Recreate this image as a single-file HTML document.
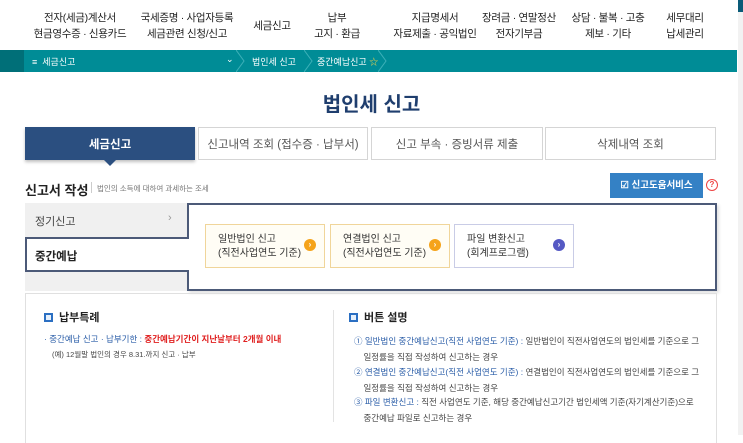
<!DOCTYPE html>
<html><head><meta charset="utf-8"><style>
*{margin:0;padding:0;box-sizing:border-box}
body{width:743px;height:435px;overflow:hidden;background:#fff;font-family:"Liberation Sans","Noto Sans CJK KR",sans-serif;color:#333;position:relative}
.a{position:absolute}
.nav{font-size:10.5px;color:#222;text-align:center;line-height:16px;top:10px;white-space:nowrap;width:120px;letter-spacing:-0.3px}
.bar{top:50px;left:0;width:737px;height:22px;background:#008c96}
.tab{top:127px;height:33px;border:1px solid #d5d5d5;background:#fff;font-size:11.5px;color:#555;display:flex;align-items:center;justify-content:center}
.card{top:224px;width:120px;height:44px;border:1px solid #f0d59a;background:#fffdf5;font-size:10px;line-height:14px;padding:8px 0 0 12px;color:#333}
.ic{position:absolute;right:8px;top:14px;width:12px;height:12px;border-radius:50%;background:#f5a31a;color:#fff;font-size:8px;line-height:12px;text-align:center;font-weight:bold}
.t{font-size:8.5px;color:#444;white-space:nowrap}
.b{color:#2b5ea8}
.sq{display:inline-block;width:9px;height:9px;border:2px solid #2b6fc2;background:#e6f0fb;margin-right:6px;vertical-align:-1px}
.chev{position:absolute;top:50px;width:10px;height:22px}
</style></head><body>
<div class="a nav" style="left:20px">전자(세금)계산서<br>현금영수증 · 신용카드</div>
<div class="a nav" style="left:127px">국세증명 · 사업자등록<br>세금관련 신청/신고</div>
<div class="a nav" style="left:212px;top:18px">세금신고</div>
<div class="a nav" style="left:277px">납부<br>고지 · 환급</div>
<div class="a nav" style="left:375px">지급명세서<br>자료제출 · 공익법인</div>
<div class="a nav" style="left:459px">장려금 · 연말정산<br>전자기부금</div>
<div class="a nav" style="left:548px">상담 · 불복 · 고충<br>제보 · 기타</div>
<div class="a nav" style="left:625px">세무대리<br>납세관리</div>
<div class="a" style="left:738px;top:0;width:5px;height:435px;background:#f2f2f2"></div>
<div class="a" style="left:738px;top:0;width:5px;height:12px;background:#0a5b78"></div>
<div class="a bar"></div>
<div class="a" style="left:0;top:50px;width:24px;height:22px;background:#006f78"></div>
<div class="a" style="left:32px;top:55px;font-size:9px;color:#fff">≡ &nbsp;세금신고</div>
<div class="a" style="left:226px;top:54px;font-size:9px;color:#fff">⌄</div>
<svg class="chev" style="left:236px" viewBox="0 0 10 22"><path d="M0 0L8 11L0 22" fill="none" stroke="#3cb0b8" stroke-width="1"/></svg>
<div class="a" style="left:252px;top:55px;font-size:9px;color:#fff">법인세 신고</div>
<svg class="chev" style="left:304px" viewBox="0 0 10 22"><path d="M0 0L8 11L0 22" fill="none" stroke="#3cb0b8" stroke-width="1"/></svg>
<div class="a" style="left:317px;top:55px;font-size:9px;color:#fff">중간예납신고 <span style="color:#f3d34a">☆</span></div>
<svg class="chev" style="left:378px" viewBox="0 0 10 22"><path d="M0 0L8 11L0 22" fill="none" stroke="#3cb0b8" stroke-width="1"/></svg>
<div class="a" style="left:0;width:743px;top:88px;text-align:center;font-size:20px;font-weight:bold;color:#1f3e6e">법인세 신고</div>
<div class="a tab" style="left:25px;width:170px;background:#2b4f80;border-color:#2b4f80;color:#fff;font-weight:bold;box-shadow:0 2px 3px rgba(0,0,0,.25)">세금신고</div>
<div class="a" style="left:104px;top:160px;border:6px solid transparent;border-top-color:#2b4f80;border-bottom:0"></div>
<div class="a tab" style="left:198px;width:170px">신고내역 조회 (접수증 · 납부서)</div>
<div class="a tab" style="left:371px;width:172px">신고 부속 · 증빙서류 제출</div>
<div class="a tab" style="left:545px;width:171px">삭제내역 조회</div>
<div class="a" style="left:25px;top:180px;font-size:13px;font-weight:bold;color:#222">신고서 작성</div>
<div class="a" style="left:91px;top:182px;width:1px;height:11px;background:#ccc"></div>
<div class="a" style="left:97px;top:183px;font-size:7.5px;color:#777">법인의 소득에 대하여 과세하는 조세</div>
<div class="a" style="left:610px;top:173px;width:93px;height:25px;background:#3481c5;color:#fff;font-size:9.5px;font-weight:bold;text-align:center;line-height:25px">☑ 신고도움서비스</div>
<div class="a" style="left:706px;top:179px;width:12px;height:12px;border:1.5px solid #e44;border-radius:50%;color:#e44;font-size:8px;text-align:center;line-height:10px;font-weight:bold">?</div>
<div class="a" style="left:25px;top:203px;width:162px;height:88px;background:#f0f0f0"></div>
<div class="a" style="left:35px;top:213px;font-size:11px;color:#444">정기신고</div>
<div class="a" style="left:168px;top:212px;font-size:11px;color:#999">›</div>
<div class="a" style="left:187px;top:203px;width:530px;height:88px;border:2px solid #4c5a78;background:#fff;box-shadow:2px 2px 3px rgba(0,0,0,.12)"></div>
<div class="a" style="left:25px;top:237px;width:164px;height:35px;border:2px solid #4c5a78;border-right:none;background:#fff"></div>
<div class="a" style="left:35px;top:248px;font-size:11.5px;font-weight:bold;color:#222">중간예납</div>
<div class="a card" style="left:205px">일반법인 신고<br>(직전사업연도 기준)<span class="ic">›</span></div>
<div class="a card" style="left:330px">연결법인 신고<br>(직전사업연도 기준)<span class="ic">›</span></div>
<div class="a card" style="left:454px;border-color:#c9cce6;background:#fff">파일 변환신고<br>(회계프로그램)<span class="ic" style="background:#5559c4">›</span></div>
<div class="a" style="left:25px;top:293px;width:692px;height:150px;border:1px solid #e0e0e0;border-bottom:none"></div>
<div class="a" style="left:44px;top:309px;font-size:11px;font-weight:bold;color:#222"><span class="sq"></span>납부특례</div>
<div class="a t" style="left:44px;top:333px"><span class="b">· 중간예납 신고 · 납부기한 : </span><span style="color:#e02020;font-weight:bold">중간예납기간이 지난날부터 2개월 이내</span></div>
<div class="a t" style="left:52px;top:349px;font-size:7.5px">(예) 12월말 법인의 경우 8.31.까지 신고 · 납부</div>
<div class="a" style="left:333px;top:310px;width:1px;height:112px;background:#e3e3e3"></div>
<div class="a" style="left:349px;top:309px;font-size:11px;font-weight:bold;color:#222"><span class="sq"></span>버튼 설명</div>
<div class="a t" style="left:354px;top:334px;line-height:15.5px"><span class="b">① 일반법인 중간예납신고(직전 사업연도 기준) :</span> 일반법인이 직전사업연도의 법인세를 기준으로 그<br>&nbsp;&nbsp;&nbsp;&nbsp;일정률을 직접 작성하여 신고하는 경우</div>
<div class="a t" style="left:354px;top:365px;line-height:15.5px"><span class="b">② 연결법인 중간예납신고(직전 사업연도 기준) :</span> 연결법인이 직전사업연도의 법인세를 기준으로 그<br>&nbsp;&nbsp;&nbsp;&nbsp;일정률을 직접 작성하여 신고하는 경우</div>
<div class="a t" style="left:354px;top:395px;line-height:15.5px"><span class="b">③ 파일 변환신고 :</span> 직전 사업연도 기준, 해당 중간예납신고기간 법인세액 기준(자기계산기준)으로<br>&nbsp;&nbsp;&nbsp;&nbsp;중간예납 파일로 신고하는 경우</div>
</body></html>
